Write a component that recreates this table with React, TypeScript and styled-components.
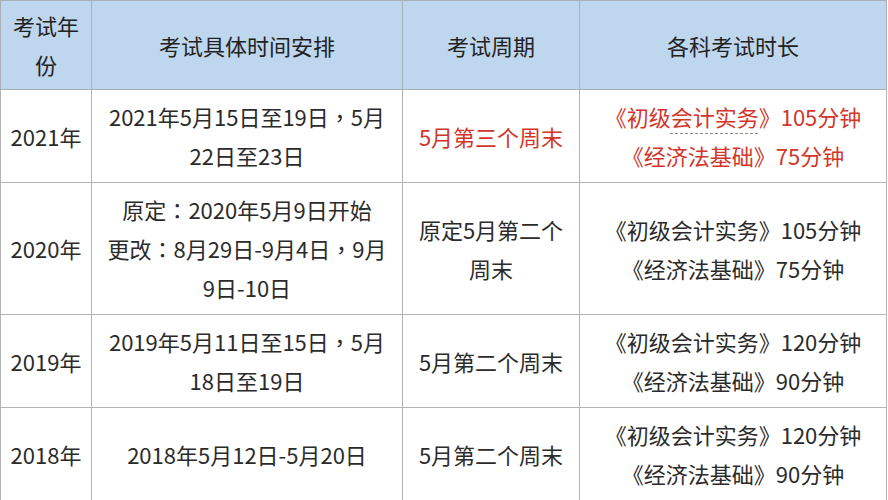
import * as React from "react"
import styled, { createGlobalStyle } from "styled-components"

const GlobalStyle = createGlobalStyle`
  html, body {
    margin: 0;
    padding: 0;
    background: #ffffff;
  }
  body {
    font-family: "Noto Sans CJK SC", "Microsoft YaHei", sans-serif;
  }
`

const Table = styled.table`
  width: 886px;
  border-collapse: collapse;
  table-layout: fixed;
  font-size: 22px;
  line-height: 39px;
  color: #2b2b2b;
`

const HeadCell = styled.th`
  background: #bed6ee;
  border: 1px solid #a9afb6;
  font-weight: 400;
  color: #222;
  padding: 5px 10px;
  text-align: center;
  vertical-align: middle;
`

const Cell = styled.td<{ $red?: boolean }>`
  border: 1px solid #b4b4b4;
  padding: 7px 8px;
  text-align: center;
  vertical-align: middle;
  color: ${(p) => (p.$red ? "#d2362b" : "#2b2b2b")};
  white-space: nowrap;
`

// full-width punctuation sits centred in the reference
const Punct = styled.span`
  font-family: "Noto Sans CJK TC", sans-serif;
`

const Dashed = styled.span`
  text-decoration: underline dashed #8a8a8a;
  text-underline-offset: 7px;
  text-decoration-thickness: 1px;
`

type Row = {
  year: string
  dates: React.ReactNode
  period: React.ReactNode
  red?: boolean
  shiwu: string
  fagui: string
}

const rows: Row[] = [
  {
    year: "2021年",
    dates: <>2021年5月15日至19日<Punct>，</Punct>5月<br />22日至23日</>,
    period: "5月第三个周末",
    red: true,
    shiwu: "105",
    fagui: "75",
  },
  {
    year: "2020年",
    dates: <>原定<Punct>：</Punct>2020年5月9日开始<br />更改<Punct>：</Punct>8月29日-9月4日<Punct>，</Punct>9月<br />9日-10日</>,
    period: <>原定5月第二个<br />周末</>,
    shiwu: "105",
    fagui: "75",
  },
  {
    year: "2019年",
    dates: <>2019年5月11日至15日<Punct>，</Punct>5月<br />18日至19日</>,
    period: "5月第二个周末",
    shiwu: "120",
    fagui: "90",
  },
  {
    year: "2018年",
    dates: "2018年5月12日-5月20日",
    period: "5月第二个周末",
    shiwu: "120",
    fagui: "90",
  },
]

export default function App() {
  return (
    <>
      <GlobalStyle />
      <Table>
        <colgroup>
          <col style={{ width: 91 }} />
          <col style={{ width: 311 }} />
          <col style={{ width: 177 }} />
          <col style={{ width: 307 }} />
        </colgroup>
        <thead>
          <tr>
            <HeadCell>考试年份</HeadCell>
            <HeadCell>考试具体时间安排</HeadCell>
            <HeadCell>考试周期</HeadCell>
            <HeadCell>各科考试时长</HeadCell>
          </tr>
        </thead>
        <tbody>
          {rows.map((r) => (
            <tr key={r.year}>
              <Cell>{r.year}</Cell>
              <Cell>{r.dates}</Cell>
              <Cell $red={r.red}>{r.period}</Cell>
              <Cell $red={r.red}>
                《初级{r.red ? <Dashed>会计实务</Dashed> : "会计实务"}》{r.shiwu}分钟
                <br />
                《经济法基础》{r.fagui}分钟
              </Cell>
            </tr>
          ))}
        </tbody>
      </Table>
    </>
  )
}
